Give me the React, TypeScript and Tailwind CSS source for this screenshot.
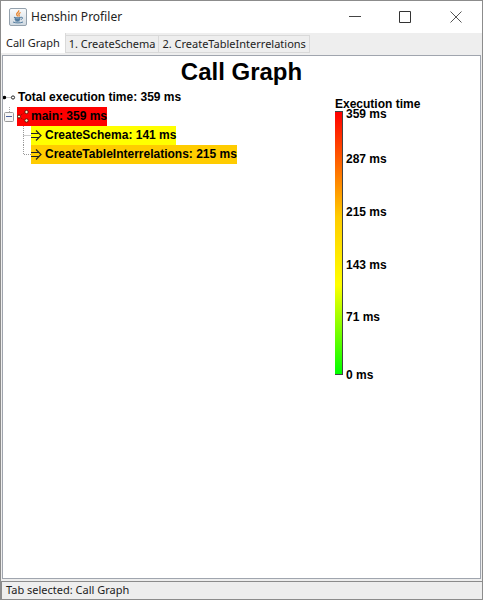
import { useState } from 'react';

const TABS = ['Call Graph', '1. CreateSchema', '2. CreateTableInterrelations'];

// each label's height is the distance to the next mark on the scale
const MARKS = [
  { label: '359 ms', className: 'h-[45px]' },
  { label: '287 ms', className: 'h-[53px]' },
  { label: '215 ms', className: 'h-[53px]' },
  { label: '143 ms', className: 'h-[52px]' },
  { label: '71 ms', className: 'h-[58px]' },
  { label: '0 ms', className: 'h-3' },
];

function JavaIcon() {
  return (
    <svg width="18" height="18" viewBox="0 0 18 18" className="shrink-0" aria-hidden>
      <defs>
        <linearGradient id="java-bg" x1="0" y1="0" x2="0" y2="1">
          <stop offset="0" stopColor="#fbfcfd" />
          <stop offset="1" stopColor="#cfd8e0" />
        </linearGradient>
      </defs>
      <rect x="0.5" y="0.5" width="17" height="17" rx="1.5" fill="url(#java-bg)" stroke="#94a1ad" />
      <path d="M9.7 2.3c.8 1.8-2.5 2.6-2 4.2.2.7.9 1.1.9 1.9M11.6 4.5c-1.7.8-2.1 1.5-1.5 2.5.3.6.1 1-.4 1.5" fill="none" stroke="#e8832c" strokeWidth="1.3" />
      <path d="M5 9.3c1.8.6 5 .6 6.8 0M5.7 11c1.5.6 4 .6 5.5 0M6.2 12.5c1.3.5 3.2.5 4.5 0" fill="none" stroke="#537c9f" strokeWidth="1.4" />
      <path d="M12 9.3c2-.5 2.2 1.4.1 2.2M4 14c2.5 1.2 7.5 1.2 10 0" fill="none" stroke="#537c9f" />
    </svg>
  );
}

function RootIcon() {
  return (
    <svg width="15" height="7" viewBox="0 0 15 7" aria-hidden>
      <circle cx="1.5" cy="3.5" r="1.8" fill="#000" />
      <path d="M4.5 3.5h4" stroke="#888" strokeDasharray="1 1" />
      <circle cx="10" cy="3.5" r="1.6" fill="#fff" stroke="#222" />
    </svg>
  );
}

function UnitIcon() {
  return (
    <svg width="14" height="15" viewBox="0 0 14 15" aria-hidden>
      <path d="M4 6l3-2M4 9l3 2" stroke="#a00000" strokeDasharray="1 1" />
      <circle cx="2" cy="7.5" r="1.5" fill="#fff8d8" stroke="#501000" strokeWidth="0.9" />
      <circle cx="9.5" cy="3" r="1.7" fill="#fff8d8" stroke="#501000" strokeWidth="0.9" />
      <circle cx="9.5" cy="11.5" r="1.7" fill="#fff8d8" stroke="#501000" strokeWidth="0.9" />
    </svg>
  );
}

function RuleIcon() {
  return (
    <svg width="14" height="13" viewBox="0 0 14 13" aria-hidden>
      <path d="M0 4.5h8.5M0 8.5h8.5M5 1.5l5 5-5 5" fill="none" stroke="#222" strokeWidth="1.2" />
    </svg>
  );
}

function Branch({ last = false }: { last?: boolean }) {
  return (
    <svg width="8" height="19" viewBox="0 0 8 19" className="shrink-0" aria-hidden>
      <path d={last ? 'M0.5 0v9.5h7.5' : 'M0.5 0v19M0.5 9.5h7.5'} fill="none" stroke="#999" strokeDasharray="1 1" />
    </svg>
  );
}

function TitleBar() {
  return (
    <header className="flex h-8 shrink-0 items-center bg-white pl-2">
      <JavaIcon />
      <h1 className="ml-1 flex-1 text-[12px]">Henshin Profiler</h1>
      <button type="button" aria-label="Minimize" className="flex w-[50px] justify-center">
        <svg width="12" height="12" viewBox="0 0 12 12">
          <path d="M0 5.5h12" stroke="#444" />
        </svg>
      </button>
      <button type="button" aria-label="Maximize" className="flex w-[50px] justify-center">
        <svg width="12" height="12" viewBox="0 0 12 12">
          <path d="M0.5 0.5h11v11h-11z" fill="none" stroke="#333" />
        </svg>
      </button>
      <button type="button" aria-label="Close" className="flex w-[52px] justify-center">
        <svg width="12" height="12" viewBox="0 0 12 12">
          <path d="M0.5 0.5l11 11M11.5 0.5l-11 11" stroke="#555" />
        </svg>
      </button>
    </header>
  );
}

function CallTree() {
  const [open, setOpen] = useState(true);

  return (
    <div className="min-w-0 flex-1 leading-[19px]">
      <p className="flex items-center">
        <RootIcon />
        Total execution time: 359 ms
      </p>
      <ul>
        <li>
          <div className="flex items-center gap-1">
            <button
              type="button"
              onClick={() => setOpen(!open)}
              aria-label={open ? 'Collapse main' : 'Expand main'}
              aria-expanded={open}
              className="flex h-[19px] w-[10px] shrink-0 items-center"
            >
              <svg width="11" height="19" viewBox="0 0 11 19" className="shrink-0">
                <path d="M6.5 0v5" stroke="#aaa" strokeDasharray="1 1" />
                <rect x="1.5" y="5.5" width="9" height="9" rx="1" fill="#f6f6f6" stroke="#999" />
                <path d={open ? 'M3 9.5h6' : 'M3 9.5h6M6 7v6'} stroke="#4b63a0" />
              </svg>
            </button>
            <span className="flex h-[19px] items-center bg-[#ff0000]">
              <UnitIcon />
              main: 359 ms
            </span>
          </div>
          {open && (
            <ul className="pl-5">
              <li className="flex">
                <Branch />
                <span className="flex items-center bg-[#ffff00]">
                  <RuleIcon />
                  CreateSchema: 141 ms
                </span>
              </li>
              <li className="flex">
                <Branch last />
                <span className="flex items-center bg-[#ffcc00]">
                  <RuleIcon />
                  CreateTableInterrelations: 215 ms
                </span>
              </li>
            </ul>
          )}
        </li>
      </ul>
    </div>
  );
}

function Legend() {
  return (
    <aside className="w-[145px] shrink-0 pt-[9px] leading-[14px]">
      <h3>Execution time</h3>
      <div className="flex">
        <div className="h-[264px] w-2 border-y border-r border-[#444] bg-[linear-gradient(to_bottom,#ff0000,#ffcc00_40%,#ffff00_66%,#00ff00)]" />
        <ul className="-mt-1 ml-[3px]">
          {MARKS.map((mark) => (
            <li key={mark.label} className={mark.className}>
              {mark.label}
            </li>
          ))}
        </ul>
      </div>
    </aside>
  );
}

export default function App() {
  const [tab, setTab] = useState(0);

  return (
    <div className="flex h-screen flex-col border border-[#8c8c8c] bg-[#eee] font-['Noto_Sans','Open_Sans',sans-serif] text-[11px] text-[#222]">
      <TitleBar />
      <div role="tablist" className="flex h-[22px] shrink-0">
        {TABS.map((name, i) => (
          <button
            key={name}
            type="button"
            role="tab"
            aria-selected={tab === i}
            onClick={() => setTab(i)}
            className={
              tab === i
                ? 'h-5 border-r border-[#d9d9d9] bg-white px-[5px] leading-5 whitespace-nowrap'
                : 'mt-[2px] h-[18px] border-t border-r border-b border-[#d9d9d9] px-[3px] leading-4 whitespace-nowrap'
            }
          >
            {name}
          </button>
        ))}
      </div>
      <main className="mx-px flex flex-1 flex-col border border-[#a0a5ae] bg-white font-['Liberation_Sans',Arial,sans-serif] text-[12px] font-bold text-black">
        {tab === 0 && (
          <>
            <h2 className="text-center text-[24px] leading-8">Call Graph</h2>
            <div className="flex">
              <CallTree />
              <Legend />
            </div>
          </>
        )}
      </main>
      <footer className="mt-[2px] h-[18px] shrink-0 border-t border-l border-[#8c8c8c] pl-1 leading-4">
        Tab selected: {TABS[tab].replace(/^\d+\. /, '')}
      </footer>
    </div>
  );
}
